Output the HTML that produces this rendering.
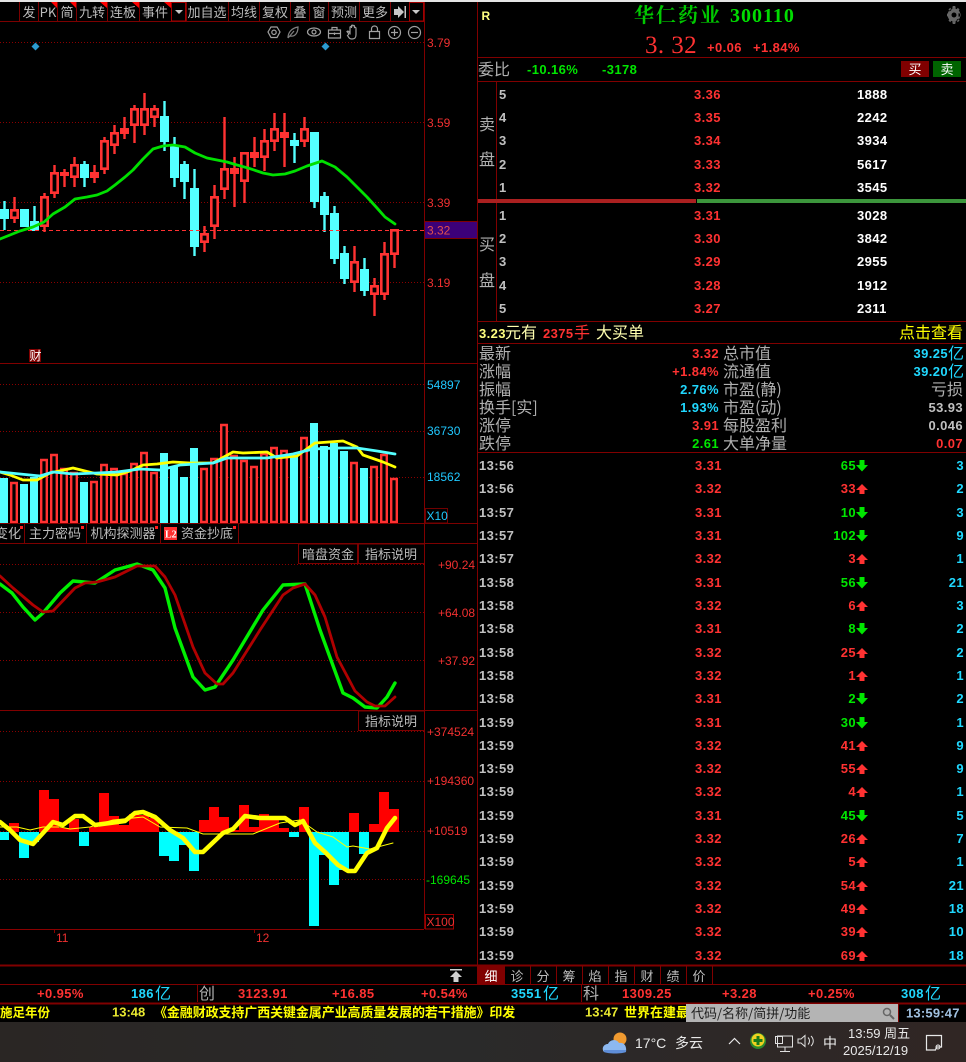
<!DOCTYPE html>
<html><head><meta charset="utf-8">
<style>
html,body{margin:0;padding:0;background:#000;width:966px;height:1062px;overflow:hidden}
svg{display:block}
text{font-family:"Liberation Sans","WenQuanYi Zen Hei","Noto Sans CJK SC",sans-serif;white-space:pre}
.a{font-size:12px}
.r{fill:#f03030}
.c{font-family:"WenQuanYi Zen Hei","Noto Sans CJK SC",sans-serif;font-size:13px;fill:#bcbcbc;text-anchor:middle}
.l{font-family:"WenQuanYi Zen Hei","Noto Sans CJK SC",sans-serif;font-size:16px;fill:#b0b0b0}
.n{font-size:13px;font-weight:bold;letter-spacing:.4px}
.t{fill:#c0c0c0}.p{fill:#ff3232}.g{fill:#00e600}.b{fill:#20d8ff}.w{fill:#fff}
.e{text-anchor:end}
.y{font-family:"Liberation Sans","Noto Sans CJK SC",sans-serif;font-size:13px;font-weight:bold;fill:#ffff00}
polyline{stroke-linejoin:round;stroke-linecap:round}
</style></head><body>
<svg width="966" height="1062" viewBox="0 0 966 1062" xmlns="http://www.w3.org/2000/svg">
<rect width="966" height="1062" fill="#000"/>
<rect width="966" height="2" fill="#e4e4e4"/>

<!-- grid lines -->
<g stroke="#8a0000" stroke-width="1" stroke-dasharray="1 2" fill="none">
<path d="M0 42.5H424M0 122.5H424M0 202.5H424M0 282.5H424"/>
<path d="M0 384.5H424M0 431.5H424M0 477.5H424"/>
<path d="M0 564.5H424M0 612.5H424M0 660.5H424"/>
<path d="M0 731.5H424M0 781.5H424M0 831.5H424M0 879.5H424"/>
</g>
<path d="M0 363.5H477" stroke="#800000" fill="none"/>

<!-- toolbar -->
<g fill="none" stroke="#7c0000" stroke-width="1">
<path d="M0 21.5H424"/>
<path d="M19.5 2V21M38.5 2V21M57.5 2V21M76.5 2V21M107.5 2V21M139.5 2V21M186.5 2V21M228.5 2V21M259.5 2V21M290.5 2V21M309.5 2V21M328.5 2V21M359.5 2V21M390.5 2V21"/>
<rect x="171.5" y="2.5" width="14" height="18.5" stroke="#a00000"/>
<rect x="409.5" y="2.5" width="14" height="18.5" stroke="#a00000"/>
</g>
<g class="tb">
<text class="c" x="29" y="17">发</text>
<text class="c" x="48" y="17">PK</text>
<text class="c" x="67" y="17">简</text>
<text class="c" x="92" y="17">九转</text>
<text class="c" x="123" y="17">连板</text>
<text class="c" x="155" y="17">事件</text>
<text class="c" x="207" y="17">加自选</text>
<text class="c" x="244" y="17">均线</text>
<text class="c" x="275" y="17">复权</text>
<text class="c" x="300" y="17">叠</text>
<text class="c" x="319" y="17">窗</text>
<text class="c" x="344" y="17">预测</text>
<text class="c" x="375" y="17">更多</text>
</g>
<path d="M51 2h6v6zM70 2h6v6zM100 2h7v6zM132 2h7v6zM164 2h7v6z" fill="#ff0000"/>
<path d="M175 10h8l-4 4zM412 10h8l-4 4z" fill="#c8c8c8"/>
<path d="M394 9h4v-3l6 6-6 6v-3h-4zM404.500 6h1.500v12h-1.500z" fill="#c8c8c8"/>

<!-- tool icons -->
<g fill="none" stroke="#a0a0a0" stroke-width="1.200">
<path d="M271 27h6l3 5-3 5.500h-6l-3-5.500z"/><circle cx="274" cy="32.300" r="2.200"/>
<path d="M288 38c0-6 4-10 10-11 0 6-3 10-8 9M288 38l6-7" stroke="#808080"/>
<ellipse cx="314" cy="32" rx="6.500" ry="4"/><circle cx="314" cy="32" r="2"/>
<path d="M328.500 30h12v8h-12zM332 30v-2.500h5V30M328.500 33.500h12M334.500 32.500v2.500"/>
<path d="M349 34l-2-2.500c1-1 2 0 3 1.500v-6c1-1 1.500 0 1.500 1v-2.500c1-1 1.500 0 1.500 1v-1c1-.5 1.500 0 1.500 1v1c1-.5 1.500 0 1.500 1v6c0 3-1 4.500-4 4.500s-3-1.500-4.500-3.500z"/>
<path d="M369.500 31.500h10v7h-10zM371.500 31.500v-2.500c0-4 6-4 6 0v2.500"/>
<circle cx="394.500" cy="32.500" r="6"/><path d="M391 32.500h7M394.500 29v7"/>
<circle cx="414.500" cy="32.500" r="6"/><path d="M411 32.500h7"/>
</g>
<path d="M35.500 42.500l4 4-4 4-4-4zM325.500 42.500l4 4-4 4-4-4z" fill="#2c9ad0"/>

<!-- kline wicks -->
<path fill="none" stroke="#ff3232" stroke-width="2.400" d="M14.500 197V223M44.500 193V232M54.500 165V198M64.500 169V187M74.500 157V187M94.500 165V183M104.500 137V174M114.500 125V154M124.500 117V139M134.500 105V143M144.500 93V135M154.500 105V127M204.500 226V252M214.500 185V239M224.500 117V199M234.500 157V207M244.500 152V203M254.500 137V167M264.500 129V171M274.500 113V151M284.500 113V167M304.500 117V147M354.500 246V292M374.500 278V316M384.500 242V300M394.500 229V268"/>
<path fill="none" stroke="#54ffff" stroke-width="2.400" d="M4.500 201V230M34.500 206V231M84.500 161V187M164.500 101V151M174.500 137V187M184.500 161V199M194.500 169V256M294.500 133V163M314.500 132V208M324.500 192V232M334.500 206V264M344.500 246V284M364.500 258V296"/>
<!-- kline bodies -->
<path fill="#000" stroke="#ff3232" stroke-width="2.600" d="M11.300 210.300h6.400v7.400h-6.400zM41.300 197.300h6.400v28.400h-6.400zM51.300 173.300h6.400v19.400h-6.400zM71.300 165.300h6.400v11.400h-6.400zM101.300 141.300h6.400v27.400h-6.400zM111.300 133.300h6.400v11.400h-6.400zM131.300 109.300h6.400v15.400h-6.400zM141.300 109.300h6.400v15.400h-6.400zM151.300 109.300h6.400v7.400h-6.400zM201.300 234.300h6.400v7.400h-6.400zM211.300 197.300h6.400v28.400h-6.400zM221.300 169.300h6.400v19.400h-6.400zM241.300 153.300h6.400v27.400h-6.400zM261.300 141.300h6.400v15.400h-6.400zM271.300 129.300h6.400v11.400h-6.400zM301.300 129.300h6.400v11.400h-6.400zM351.300 262.300h6.400v19.400h-6.400zM371.300 286.300h6.400v7.400h-6.400zM381.300 254.300h6.400v39.400h-6.400zM391.300 230.300h6.400v23.400h-6.400z"/>
<path fill="#ff3232" d="M60 172h9v4h-9zM90 172h9v6h-9zM120 128h9v6h-9zM230 168h9v6h-9zM250 152h9v6h-9zM280 132h9v6h-9z"/>
<path fill="#54ffff" d="M0 209h9v10H0zM20 209h9v18h-9zM30 221h9v10h-9zM80 164h9v14h-9zM160 116h9v26h-9zM170 146h9v32h-9zM180 164h9v18h-9zM190 188h9v59h-9zM290 140h9v6h-9zM310 132h9v70h-9zM320 196h9v19h-9zM330 213h9v46h-9zM340 253h9v26h-9zM360 269h9v22h-9z"/>
<path d="M0 230.500H424" stroke="#ff3232" stroke-width="1" stroke-dasharray="4 3" fill="none"/>
<polyline fill="none" stroke="#00e000" stroke-width="2.800" points="0,239 10,235 20,231 33,227 44,222 53,214 65,207 75,199 87,197 97,195 107,191 115,185 125,177 133,170 143,159 153,149 163,146 173,145 185,147 195,153 207,158 217,160 227,162 237,165 248,168 263,173 273,175 285,174 295,171 307,166 322,161 335,167 347,177 357,187 367,197 377,208 385,217 395,224"/>
<rect x="29" y="349" width="12" height="13" fill="#800000"/>
<text x="29.500" y="360" style="font-family:'WenQuanYi Zen Hei','Noto Sans CJK SC',sans-serif;font-size:12px;fill:#fff">财</text>

<!-- volume -->
<path fill="#000" stroke="#ff3232" stroke-width="2.400" d="M31.200 483h5.600v39h-5.600zM41.200 460h5.600v62h-5.600zM51.200 455h5.600v67h-5.600zM61.200 469h5.600v53h-5.600zM71.200 473h5.600v49h-5.600zM91.200 482h5.600v40h-5.600zM101.200 465h5.600v57h-5.600zM111.200 469h5.600v53h-5.600zM121.200 474h5.600v48h-5.600zM131.200 464h5.600v58h-5.600zM141.200 453h5.600v69h-5.600zM151.200 473h5.600v49h-5.600zM201.200 469h5.600v53h-5.600zM211.200 459h5.600v63h-5.600zM221.200 425h5.600v97h-5.600zM231.200 456h5.600v66h-5.600zM241.200 461h5.600v61h-5.600zM251.200 467h5.600v55h-5.600zM261.200 454h5.600v68h-5.600zM271.200 448h5.600v74h-5.600zM281.200 451h5.600v71h-5.600zM301.200 438h5.600v84h-5.600zM351.200 463h5.600v59h-5.600zM371.200 467h5.600v55h-5.600zM381.200 455h5.600v67h-5.600zM391.200 479h5.600v43h-5.600zM11.200 483h5.600v39h-5.600z"/>
<path fill="#54ffff" d="M0 478h8V523H0zM20 484h8V523h-8zM30 477h8V523h-8zM80 482h8V523h-8zM160 453h8V523h-8zM170 467h8V523h-8zM180 477h8V523h-8zM190 448h8V523h-8zM290 455h8V523h-8zM310 423h8V523h-8zM320 446h8V523h-8zM330 443h8V523h-8zM340 451h8V523h-8zM360 468h8V523h-8z"/>
<polyline fill="none" stroke="#ffff00" stroke-width="2.800" points="0,472 10,475 23,480 37,480 50,473 73,468 97,474 117,475 130,471 143,465 157,464 173,462 190,463 213,463 233,452 243,453 267,452 277,458 297,456 315,443 343,441 357,447 363,455 383,462 395,467"/>
<polyline fill="none" stroke="#54ffff" stroke-width="2.800" points="0,472 20,474 40,476 53,472 73,474 97,473 117,472 140,469 160,470 180,465 213,463 227,458 240,458 267,458 293,454 313,449 340,448 357,448 377,451 395,454"/>

<!-- tab row -->
<g stroke="#7c0000" fill="none">
<path d="M0 523.500H477M0 543.500H477M24.500 524V543M86.500 524V543M160.500 524V543M238.500 524V543"/>
<rect x="298.500" y="544" width="59" height="19.500"/>
<rect x="358.500" y="544" width="66" height="19.500"/>
<rect x="358.500" y="711" width="66" height="19.500"/>
</g>
<text class="c" x="8" y="538">变化</text>
<text class="c" x="55" y="538">主力密码</text>
<text class="c" x="123" y="538">机构探测器</text>
<rect x="164" y="527" width="13" height="13" fill="#ff3030"/>
<text x="165" y="537.500" style="font-size:10px;fill:#fff;font-family:'Liberation Serif',serif;font-weight:bold">L2</text>
<text class="c" x="207" y="538">资金抄底</text>
<path d="M20 526h3v3h-3zM81 526h3v3h-3zM155 526h3v3h-3zM233 526h3v3h-3z" fill="#ff2020"/>
<text class="c" x="328" y="559">暗盘资金</text>
<text class="c" x="391" y="559">指标说明</text>
<text class="c" x="391" y="726">指标说明</text>

<!-- oscillator -->
<polyline fill="none" stroke="#00f000" stroke-width="3.400" points="0,584 12,593 23,607 35,620 43,613 60,593 73,581 95,583 115,570 137,564 153,570 165,588 175,628 193,677 205,690 215,687 233,660 263,610 283,585 305,584 320,630 343,693 353,698 365,707 377,708 387,697 395,683"/>
<polyline fill="none" stroke="#b00000" stroke-width="2.800" points="0,576 13,588 33,605 43,612 53,611 75,588 85,583 97,582 115,577 137,566 155,566 165,577 175,595 193,647 205,673 217,684 223,684 233,673 260,630 283,595 293,588 305,584 315,595 325,617 337,657 355,691 367,702 375,706 385,706 395,697"/>
<path d="M0 710.500H477" stroke="#800000" fill="none"/>

<!-- macd -->
<path fill="#ff0000" d="M9 823h10v9H9zM39 790h10v42H39zM49 799h10v33H49zM59 828h10v4H59zM69 819h10v13H69zM89 827h10v5H89zM99 793h10v39H99zM109 816h10v16h-10zM119 825h10v7h-10zM129 814h10v18h-10zM139 815h10v17h-10zM149 818h10v14h-10zM199 820h10v12h-10zM209 807h10v25h-10zM219 817h10v15h-10zM229 830h10v2h-10zM239 805h10v27h-10zM249 827h10v5h-10zM259 814h10v18h-10zM269 817h10v15h-10zM279 828h10v4h-10zM299 807h10v25h-10zM349 813h10v19h-10zM369 824h10v8h-10zM379 792h10v40h-10zM389 809h10v23h-10z"/>
<path fill="#00ffff" d="M0 832h9v8H0zM19 832h10v26H19zM29 832h10v10H29zM79 832h10v14H79zM159 832h10v24h-10zM169 832h10v29h-10zM179 832h10v13h-10zM189 832h10v39h-10zM289 832h10v5h-10zM309 832h10v94h-10zM319 832h10v23h-10zM329 832h10v53h-10zM339 832h10v38h-10zM359 832h10v22h-10z"/>
<polyline fill="none" stroke="#ffff00" stroke-width="1" points="0,827 17,827 30,830 43,827 60,827 70,829 90,827 113,820 143,817 160,827 187,828 203,834 233,834 253,834 280,823 300,820 317,832 333,837 347,847 353,846 370,849 393,843"/>
<polyline fill="none" stroke="#ffff00" stroke-width="4.500" points="0,822 10,830 20,840 33,844 43,833 53,822 63,825 75,816 83,816 95,825 110,823 125,821 135,813 143,812 155,817 170,830 183,838 195,852 203,852 223,833 233,829 245,816 260,818 285,818 295,825 303,821 315,843 325,852 338,865 348,871 355,871 367,853 377,848 387,828 395,818"/>
<path d="M0 929.500H424M54.500 930V933M254.500 930V933" stroke="#8a0000" fill="none"/>
<text class="a r" x="56" y="942">11</text>
<text class="a r" x="256" y="942">12</text>

<!-- axis -->
<path d="M424.500 2V929" stroke="#800000" fill="none"/>
<rect x="425" y="221" width="52" height="17" fill="#3c0078"/>
<path d="M425 221.500H477M425 238.500H477" stroke="#800000" fill="none"/>
<text class="a r" x="427" y="47">3.79</text>
<text class="a r" x="427" y="127">3.59</text>
<text class="a r" x="427" y="207">3.39</text>
<text class="a" x="427" y="234.500" style="fill:#e05050">3.32</text>
<text class="a r" x="427" y="287">3.19</text>
<text class="a" x="427" y="389" fill="#20c8ff">54897</text>
<text class="a" x="427" y="435" fill="#20c8ff">36730</text>
<text class="a" x="427" y="481" fill="#20c8ff">18562</text>
<rect x="425.500" y="508.500" width="22" height="14.500" fill="none" stroke="#700000"/>
<text class="a" x="426.500" y="520" fill="#20c8ff">X10</text>
<text class="a r" x="438" y="569">+90.24</text>
<text class="a r" x="438" y="617">+64.08</text>
<text class="a r" x="438" y="665">+37.92</text>
<text class="a r" x="427" y="736">+374524</text>
<text class="a r" x="427" y="785">+194360</text>
<text class="a r" x="427" y="835">+10519</text>
<text class="a g" x="426" y="884">-169645</text>
<rect x="425.500" y="914.500" width="28" height="14.500" fill="none" stroke="#a00000"/>
<text class="a r" x="426.500" y="926">X100</text>

<!-- right panel frame -->
<path d="M477.500 2V966" stroke="#800000" fill="none"/>
<g stroke="#800000" fill="none">
<path d="M478 57.500H966M478 81.500H966M478 321.500H966M478 343.500H966M478 452.500H966M496.500 82V199M496.500 203V321"/>
</g>
<text x="481.500" y="20" style="font-size:12px;font-weight:bold;fill:#ffff80">R</text>
<text x="634" y="22" style="font-family:'Noto Serif CJK SC','Liberation Serif',serif;font-size:20px;font-weight:bold;fill:#00c800;letter-spacing:2px">华仁药业</text>
<text x="730" y="22" style="font-family:'Liberation Serif',serif;font-size:20px;fill:#00dc00;font-weight:bold;letter-spacing:1px">300110</text>
<text x="645" y="53" style="font-family:'Liberation Serif',serif;font-size:25px;fill:#ff3232;letter-spacing:.4px">3. 32</text>
<text x="707" y="52" class="n p">+0.06</text>
<text x="753" y="52" class="n p">+1.84%</text>
<path d="M954 8.500a6.500 6.500 0 1 0 .01 0zM952.800 6h2.400l.6 2.500h-3.600zM952.800 24h2.400l.6-2.500h-3.600zM947 13.800v2.400l2.500.6v-3.600zM961 13.800v2.400l-2.500.6v-3.600zM948.500 9.500l1.700-1.700 1.500 2-2 1.700zM959.500 9.500l-1.700-1.700-1.500 2 2 1.700zM948.500 20.500l1.700 1.700 1.500-2-2-1.700zM959.500 20.500l-1.700 1.700-1.500-2 2-1.700z" fill="#666"/>
<circle cx="954" cy="15" r="2.500" fill="#000"/>
<text class="l" x="478" y="75">委比</text>
<text x="527" y="74" class="n g">-10.16%</text>
<text x="602" y="74" class="n g">-3178</text>
<rect x="901" y="61" width="28" height="16" fill="#800000"/>
<rect x="933" y="61" width="28" height="16" fill="#006400"/>
<text class="c" x="915" y="74" style="fill:#fff">买</text>
<text class="c" x="947" y="74" style="fill:#fff">卖</text>

<!-- order book -->
<text class="l" x="479" y="130">卖</text><text class="l" x="479" y="165">盘</text>
<text class="l" x="479" y="250">买</text><text class="l" x="479" y="286">盘</text>
<g class="n">
<text class="t" x="499" y="99">5</text><text class="p" x="694" y="99">3.36</text><text class="w" x="857" y="99">1888</text>
<text class="t" x="499" y="122">4</text><text class="p" x="694" y="122">3.35</text><text class="w" x="857" y="122">2242</text>
<text class="t" x="499" y="145">3</text><text class="p" x="694" y="145">3.34</text><text class="w" x="857" y="145">3934</text>
<text class="t" x="499" y="169">2</text><text class="p" x="694" y="169">3.33</text><text class="w" x="857" y="169">5617</text>
<text class="t" x="499" y="192">1</text><text class="p" x="694" y="192">3.32</text><text class="w" x="857" y="192">3545</text>
<text class="t" x="499" y="220">1</text><text class="p" x="694" y="220">3.31</text><text class="w" x="857" y="220">3028</text>
<text class="t" x="499" y="243">2</text><text class="p" x="694" y="243">3.30</text><text class="w" x="857" y="243">3842</text>
<text class="t" x="499" y="266">3</text><text class="p" x="694" y="266">3.29</text><text class="w" x="857" y="266">2955</text>
<text class="t" x="499" y="290">4</text><text class="p" x="694" y="290">3.28</text><text class="w" x="857" y="290">1912</text>
<text class="t" x="499" y="313">5</text><text class="p" x="694" y="313">3.27</text><text class="w" x="857" y="313">2311</text>
</g>
<rect x="478" y="199" width="218" height="4" fill="#aa2020"/>
<rect x="697" y="199" width="269" height="4" fill="#3c963c"/>

<!-- big order -->
<text x="479" y="338" class="n" fill="#ffff80">3.23</text>
<text x="505" y="338" class="l" style="fill:#ffffb0">元有</text>
<text x="543" y="338" class="n p">2375</text>
<text x="574" y="338" class="l" style="fill:#ff3232">手</text>
<text x="596" y="338" class="l" style="fill:#ffffb0">大买单</text>
<text x="899" y="338" class="l" style="fill:#ffff00">点击查看</text>

<!-- stats -->
<text class="l" x="479" y="359">最新</text>
<text class="l" x="479" y="377">涨幅</text>
<text class="l" x="479" y="395">振幅</text>
<text class="l" x="479" y="413">换手[实]</text>
<text class="l" x="479" y="431">涨停</text>
<text class="l" x="479" y="449">跌停</text>
<text class="l" x="723" y="359">总市值</text>
<text class="l" x="723" y="377">流通值</text>
<text class="l" x="723" y="395">市盈(静)</text>
<text class="l" x="723" y="413">市盈(动)</text>
<text class="l" x="723" y="431">每股盈利</text>
<text class="l" x="723" y="449">大单净量</text>
<g class="n e">
<text class="p" x="719" y="358">3.32</text>
<text class="p" x="719" y="376">+1.84%</text>
<text class="b" x="719" y="394">2.76%</text>
<text class="b" x="719" y="412">1.93%</text>
<text class="p" x="719" y="430">3.91</text>
<text class="g" x="719" y="448">2.61</text>
<text class="b" x="948" y="358">39.25</text>
<text class="b" x="948" y="376">39.20</text>
<text class="t" x="963" y="412">53.93</text>
<text class="t" x="963" y="430">0.046</text>
<text class="p" x="963" y="448">0.07</text>
</g>
<text class="l" x="948" y="359" style="fill:#20d8ff">亿</text>
<text class="l" x="948" y="377" style="fill:#20d8ff">亿</text>
<text class="l" x="931" y="395">亏损</text>

<!-- ticks -->
<g class="n">
<text class="t" x="479" y="470">13:56</text><text class="p" x="695" y="470">3.31</text><text class="g e" x="856" y="470">65</text><text class="b e" x="964" y="470">3</text>
<text class="t" x="479" y="493">13:56</text><text class="p" x="695" y="493">3.32</text><text class="p e" x="856" y="493">33</text><text class="b e" x="964" y="493">2</text>
<text class="t" x="479" y="517">13:57</text><text class="p" x="695" y="517">3.31</text><text class="g e" x="856" y="517">10</text><text class="b e" x="964" y="517">3</text>
<text class="t" x="479" y="540">13:57</text><text class="p" x="695" y="540">3.31</text><text class="g e" x="856" y="540">102</text><text class="b e" x="964" y="540">9</text>
<text class="t" x="479" y="563">13:57</text><text class="p" x="695" y="563">3.32</text><text class="p e" x="856" y="563">3</text><text class="b e" x="964" y="563">1</text>
<text class="t" x="479" y="587">13:58</text><text class="p" x="695" y="587">3.31</text><text class="g e" x="856" y="587">56</text><text class="b e" x="964" y="587">21</text>
<text class="t" x="479" y="610">13:58</text><text class="p" x="695" y="610">3.32</text><text class="p e" x="856" y="610">6</text><text class="b e" x="964" y="610">3</text>
<text class="t" x="479" y="633">13:58</text><text class="p" x="695" y="633">3.31</text><text class="g e" x="856" y="633">8</text><text class="b e" x="964" y="633">2</text>
<text class="t" x="479" y="657">13:58</text><text class="p" x="695" y="657">3.32</text><text class="p e" x="856" y="657">25</text><text class="b e" x="964" y="657">2</text>
<text class="t" x="479" y="680">13:58</text><text class="p" x="695" y="680">3.32</text><text class="p e" x="856" y="680">1</text><text class="b e" x="964" y="680">1</text>
<text class="t" x="479" y="703">13:58</text><text class="p" x="695" y="703">3.31</text><text class="g e" x="856" y="703">2</text><text class="b e" x="964" y="703">2</text>
<text class="t" x="479" y="727">13:59</text><text class="p" x="695" y="727">3.31</text><text class="g e" x="856" y="727">30</text><text class="b e" x="964" y="727">1</text>
<text class="t" x="479" y="750">13:59</text><text class="p" x="695" y="750">3.32</text><text class="p e" x="856" y="750">41</text><text class="b e" x="964" y="750">9</text>
<text class="t" x="479" y="773">13:59</text><text class="p" x="695" y="773">3.32</text><text class="p e" x="856" y="773">55</text><text class="b e" x="964" y="773">9</text>
<text class="t" x="479" y="796">13:59</text><text class="p" x="695" y="796">3.32</text><text class="p e" x="856" y="796">4</text><text class="b e" x="964" y="796">1</text>
<text class="t" x="479" y="820">13:59</text><text class="p" x="695" y="820">3.31</text><text class="g e" x="856" y="820">45</text><text class="b e" x="964" y="820">5</text>
<text class="t" x="479" y="843">13:59</text><text class="p" x="695" y="843">3.32</text><text class="p e" x="856" y="843">26</text><text class="b e" x="964" y="843">7</text>
<text class="t" x="479" y="866">13:59</text><text class="p" x="695" y="866">3.32</text><text class="p e" x="856" y="866">5</text><text class="b e" x="964" y="866">1</text>
<text class="t" x="479" y="890">13:59</text><text class="p" x="695" y="890">3.32</text><text class="p e" x="856" y="890">54</text><text class="b e" x="964" y="890">21</text>
<text class="t" x="479" y="913">13:59</text><text class="p" x="695" y="913">3.32</text><text class="p e" x="856" y="913">49</text><text class="b e" x="964" y="913">18</text>
<text class="t" x="479" y="936">13:59</text><text class="p" x="695" y="936">3.32</text><text class="p e" x="856" y="936">39</text><text class="b e" x="964" y="936">10</text>
<text class="t" x="479" y="960">13:59</text><text class="p" x="695" y="960">3.32</text><text class="p e" x="856" y="960">69</text><text class="b e" x="964" y="960">18</text>
</g>
<path fill="#ff3232" d="M862 484l6 6h-3.500v4h-5v-4H856zM862 554l6 6h-3.500v4h-5v-4H856zM862 601l6 6h-3.500v4h-5v-4H856zM862 648l6 6h-3.500v4h-5v-4H856zM862 671l6 6h-3.500v4h-5v-4H856zM862 741l6 6h-3.500v4h-5v-4H856zM862 764l6 6h-3.500v4h-5v-4H856zM862 787l6 6h-3.500v4h-5v-4H856zM862 834l6 6h-3.500v4h-5v-4H856zM862 857l6 6h-3.500v4h-5v-4H856zM862 881l6 6h-3.500v4h-5v-4H856zM862 904l6 6h-3.500v4h-5v-4H856zM862 927l6 6h-3.500v4h-5v-4H856zM862 951l6 6h-3.500v4h-5v-4H856z"/>
<path fill="#00e600" d="M859.500 460h5v5h3.500l-6 6.500-6-6.500h3.500zM859.500 507h5v5h3.500l-6 6.500-6-6.500h3.500zM859.500 530h5v5h3.500l-6 6.500-6-6.500h3.500zM859.500 577h5v5h3.500l-6 6.500-6-6.500h3.500zM859.500 623h5v5h3.500l-6 6.500-6-6.500h3.500zM859.500 693h5v5h3.500l-6 6.500-6-6.500h3.500zM859.500 717h5v5h3.500l-6 6.500-6-6.500h3.500zM859.500 810h5v5h3.500l-6 6.500-6-6.500h3.500z"/>

<!-- bottom bars -->
<rect x="0" y="964.500" width="966" height="2" fill="#800000"/>
<rect x="478" y="966" width="27" height="18" fill="#800000"/>
<path d="M450 969h12v1.500h-12zM456 971l6 6h-3.500v5h-5v-5H450z" fill="#d0d0d0"/>
<g stroke="#800000" fill="none">
<path d="M477.500 966V984M504.500 966V984M530.500 966V984M556.500 966V984M582.500 966V984M608.500 966V984M634.500 966V984M660.500 966V984M686.500 966V984M712.500 966V984"/>
</g>
<text class="c" x="491" y="981" style="fill:#fff">细</text>
<text class="c" x="517" y="981">诊</text>
<text class="c" x="543" y="981">分</text>
<text class="c" x="569" y="981">筹</text>
<text class="c" x="595" y="981">焰</text>
<text class="c" x="621" y="981">指</text>
<text class="c" x="647" y="981">财</text>
<text class="c" x="673" y="981">绩</text>
<text class="c" x="699" y="981">价</text>
<rect x="0" y="984" width="966" height="1" fill="#800000"/>
<rect x="0" y="1002.500" width="966" height="2" fill="#800000"/>
<path d="M197.500 985V1002M581.500 985V1002" stroke="#800000" fill="none"/>
<g class="n">
<text class="p" x="37" y="998">+0.95%</text>
<text class="b" x="131" y="998">186</text>
<text class="p" x="238" y="998">3123.91</text>
<text class="p" x="332" y="998">+16.85</text>
<text class="p" x="421" y="998">+0.54%</text>
<text class="b" x="511" y="998">3551</text>
<text class="p" x="622" y="998">1309.25</text>
<text class="p" x="722" y="998">+3.28</text>
<text class="p" x="808" y="998">+0.25%</text>
<text class="b" x="901" y="998">308</text>
</g>
<text class="l" x="155" y="999" style="fill:#20d8ff">亿</text>
<text class="l" x="199" y="999">创</text>
<text class="l" x="543" y="999" style="fill:#20d8ff">亿</text>
<text class="l" x="583" y="999">科</text>
<text class="l" x="925" y="999" style="fill:#20d8ff">亿</text>

<!-- ticker -->
<text class="y" x="0" y="1017" style="font-size:12.500px">施足年份</text>
<text class="y" x="112" y="1016.500" style="fill:#e8e830">13:48</text>
<text class="y" x="154" y="1017" style="letter-spacing:-.1px">《金融财政支持广西关键金属产业高质量发展的若干措施》印发</text>
<text class="y" x="585" y="1016.500" style="fill:#e8e830">13:47</text>
<text class="y" x="624" y="1017">世界在建最</text>
<rect x="686" y="1004" width="212" height="18" fill="#b4b4b4"/>
<text x="691" y="1018" style="font-family:'WenQuanYi Zen Hei','Noto Sans CJK SC',sans-serif;font-size:13px;fill:#202020">代码/名称/简拼/功能</text>
<circle cx="887" cy="1012" r="3.500" fill="none" stroke="#666" stroke-width="1.500"/>
<path d="M890 1015l4 4" stroke="#666" stroke-width="2"/>
<path d="M898.500 1004V1022" stroke="#800000"/>
<text x="906" y="1017.500" style="font-size:13px;font-weight:bold;fill:#a0c0e0;letter-spacing:.2px">13:59:47</text>

<!-- taskbar -->
<defs><linearGradient id="tb" x1="0" x2="1" y1="0" y2="0"><stop offset="0" stop-color="#2a2624"/><stop offset=".45" stop-color="#2a2a2a"/><stop offset="1" stop-color="#302624"/></linearGradient></defs>
<rect x="0" y="1022" width="966" height="40" fill="url(#tb)"/>
<circle cx="620" cy="1039" r="6.500" fill="#f09a30"/>
<path d="M604 1052c-3-4 0-8 4-8 2-5 9-5 11-1 5-1 8 3 7 9z" fill="#8cb8f0"/>
<path d="M604 1052c4 2 18 2 22 0l0-2h-22z" fill="#5f8ed8"/>
<text x="635" y="1048" style="font-size:14px;fill:#e8e8e8">17°C</text>
<text x="675" y="1048" style="font-family:'Noto Sans CJK SC',sans-serif;font-size:14px;fill:#e8e8e8">多云</text>
<path d="M729 1044l5.500-5.500 5.500 5.500" fill="none" stroke="#e8e8e8" stroke-width="1.200"/>
<circle cx="758" cy="1041" r="8" fill="#2c8a2c"/>
<circle cx="758" cy="1040" r="6.500" fill="#f0d020"/>
<path d="M753.500 1039h3v-3h3v3h3v3h-3v3h-3v-3h-3z" fill="#1a7a1a"/>
<g fill="none" stroke="#e0e0e0" stroke-width="1">
<rect x="775.500" y="1036.500" width="7" height="7"/>
<rect x="777.500" y="1036" width="15" height="11" />
<path d="M785 1047v4M780 1051.500h10"/>
<path d="M798 1039h3l4-3.500v11l-4-3.500h-3zM808 1037.500c2 2 2 5 0 7M811 1036c3 3 3 7 0 10"/>
</g>
<text x="823" y="1048" style="font-family:'Noto Sans CJK SC',sans-serif;font-size:14px;fill:#f0f0f0">中</text>
<text x="848" y="1038" style="font-family:'Liberation Sans','Noto Sans CJK SC',sans-serif;font-size:13px;fill:#e8e8e8">13:59 周五</text>
<text x="843" y="1055" style="font-size:13px;fill:#e8e8e8">2025/12/19</text>
<path d="M926.500 1035.500h15v11.500h-5l-1 3h-9z" fill="none" stroke="#e8e8e8" stroke-width="1.200"/>
<circle cx="938" cy="1047" r="2" fill="none" stroke="#e8e8e8"/>
</svg>
</body></html>
